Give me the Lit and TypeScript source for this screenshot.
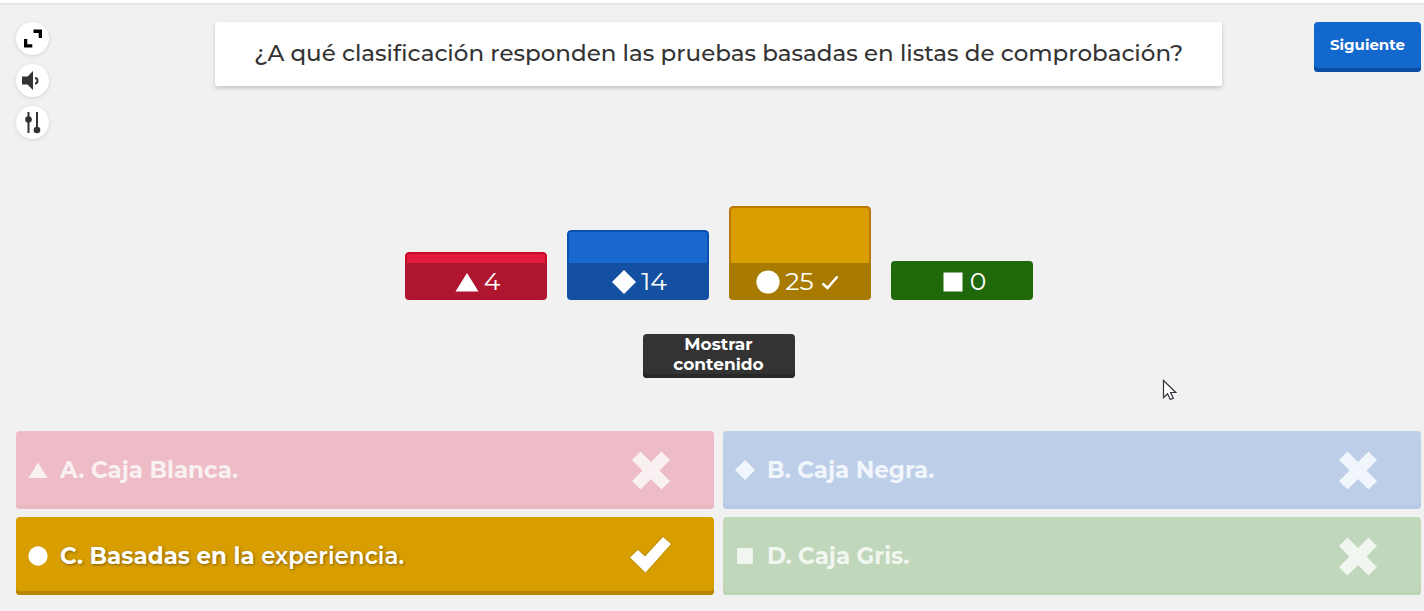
import { LitElement, html, svg, css } from "lit";
import { customElement, property } from "lit/decorators.js";
import { classMap } from "lit/directives/class-map.js";

type Shape = "triangle" | "diamond" | "circle" | "square";

interface Answer {
  shape: Shape;
  lead: string;
  tail?: string;
  votes: number;
  correct: boolean;
}

const ANSWERS: Answer[] = [
  { shape: "triangle", lead: "A. Caja Blanca.", votes: 4, correct: false },
  { shape: "diamond", lead: "B. Caja Negra.", votes: 14, correct: false },
  { shape: "circle", lead: "C. Basadas en la", tail: "experiencia.", votes: 25, correct: true },
  { shape: "square", lead: "D. Caja Gris.", votes: 0, correct: false },
];

const SHAPES = {
  triangle: svg`<path d="M12 3L23.5 21.5H.5z" />`,
  diamond: svg`<path d="M12 0L24 12 12 24 0 12z" />`,
  circle: svg`<circle cx="12" cy="12" r="11.6" />`,
  square: svg`<path d="M2.5 2.5h19v19h-19z" />`,
};

@customElement("quiz-shape")
export class QuizShape extends LitElement {
  static styles = css`
    :host { display: block; flex: none; }
    .glyph { display: block; width: 100%; height: 100%; fill: currentColor; }
  `;

  @property() name: Shape = "circle";

  render() {
    return html`<svg class="glyph" viewBox="0 0 24 24" aria-hidden="true">${SHAPES[this.name]}</svg>`;
  }
}

@customElement("vote-chart")
export class VoteChart extends LitElement {
  static styles = css`
    :host { display: block; }
    .bars { display: flex; justify-content: center; align-items: flex-end; gap: 20px; }
    .bar { width: 142px; border-radius: 4px; overflow: hidden; color: #fff; }
    .level { box-sizing: border-box; border: 2px solid; border-bottom: 0; border-radius: 4px 4px 0 0; }
    .label {
      display: flex; align-items: center; justify-content: center; gap: 5px;
      height: 37px; padding-left: 4px; font-size: 25px; line-height: 37px;
    }
    .shape { width: 24px; height: 24px; }
    .tick { width: 18px; height: 18px; margin: 0 8px 0 2px; fill: none; stroke: #fff; stroke-width: 2.6; }
    .triangle .level { background: #e21b3c; border-color: #c60929; }
    .triangle .label { background: #b0152f; }
    .diamond .level { background: #1968d0; border-color: #0a51b0; }
    .diamond .label { background: #1450a1; }
    .circle .level { background: #d89e00; border-color: #c07600; }
    .circle .label { background: #a87b00; }
    .square .level { background: #1f690b; border-color: #1f690b; }
    .square .label { background: #1f690b; }
  `;

  @property({ attribute: false }) answers: Answer[] = [];

  render() {
    return html`<div class="bars">
      ${this.answers.map(
        (a) => html`<div class="bar ${a.shape}">
          <div class="level" style="height:${2 + Math.round(a.votes * 2.2)}px"></div>
          <div class="label">
            <quiz-shape class="shape" .name=${a.shape}></quiz-shape>
            <span>${a.votes}</span>
            ${a.correct
              ? html`<svg class="tick" viewBox="0 0 18 18" role="img" aria-label="Correcta"><path d="M1.5 10.5l5 4.5L16.500 3.500" /></svg>`
              : null}
          </div>
        </div>`
      )}
    </div>`;
  }
}

@customElement("answer-card")
export class AnswerCard extends LitElement {
  static styles = css`
    :host { display: block; }
    .card {
      box-sizing: border-box; width: 100%; min-height: 78px; margin: 0; border: 0;
      border-radius: 4px; padding: 0 42px 0 12px;
      display: flex; align-items: center; gap: 12px;
      font: 700 23px/30px Montserrat, Inter, sans-serif; text-align: left;
    }
    .shape { width: 20px; height: 20px; }
    .text { flex: 1; }
    .tail { font-weight: 600; }
    .mark { width: 42px; height: 42px; flex: none; fill: currentColor; }
    .triangle { background: #eebcc6; color: #f9f0f2; box-shadow: inset 0 -4px #eab8c3; }
    .diamond { background: #bccee8; color: #f1f5fc; box-shadow: inset 0 -4px #b8cae5; }
    .square { background: #c1d7bb; color: #f1f6f0; box-shadow: inset 0 -4px #bdd3b8; }
    .circle { background: #d89e00; color: #fff; box-shadow: inset 0 -4px #b88600; }
    .circle .text { text-shadow: 1px 1px 3px rgba(0, 0, 0, 0.4); }
    .correct .mark { filter: drop-shadow(0 0 1px rgba(0, 0, 0, 0.25)); }
  `;

  @property({ attribute: false }) answer!: Answer;

  render() {
    const { shape, lead, tail, correct } = this.answer;
    return html`<button class=${classMap({ card: true, [shape]: true, correct })} type="button">
      <quiz-shape class="shape" .name=${shape}></quiz-shape>
      <span class="text">${lead}${tail ? html` <span class="tail">${tail}</span>` : null}</span>
      <svg class="mark" viewBox="0 0 42 42" role="img" aria-label=${correct ? "Correcta" : "Incorrecta"}>
        ${correct
          ? svg`<path d="M0 22.500L8 15 15 21.500 33 2 41 9 15.500 37.500z" />`
          : svg`<path d="M10.500 2.500L21 13 31.500 2.500 40 11 29.500 21.500 40 32 31.500 40.500 21 30 10.500 40.500 2 32 12.500 21.500 2 11z" />`}
      </svg>
    </button>`;
  }
}

@customElement("app-root")
export class AppRoot extends LitElement {
  static styles = css`
    :host { display: block; font-family: Montserrat, Inter, sans-serif; color: #333; }
    .page {
      box-sizing: border-box; min-height: 100vh; background: #f1f1f1;
      border-top: 3px solid #fff; display: flex; flex-direction: column;
    }
    .header {
      border-top: 2px solid #e5e5e5; padding: 17px 3px 0 16px;
      display: grid; grid-template-columns: 107px minmax(0, 1fr) 107px;
      column-gap: 92px; align-items: start;
    }
    .tools { display: flex; flex-direction: column; gap: 9px; }
    .tool {
      width: 33px; height: 33px; padding: 0; border: 0; border-radius: 50%;
      background: #fff; box-shadow: 0 1px 4px rgba(0, 0, 0, 0.12);
    }
    .tool svg { display: block; width: 33px; height: 33px; }
    .question {
      margin: 0; padding: 15px 20px 17px; background: #fff; border-radius: 2px; text-align: center;
      font-size: 23px; line-height: 32px; font-weight: 500;
      box-shadow: 0 2px 4px rgba(0, 0, 0, 0.2);
    }
    .button {
      border: 0; border-radius: 4px; color: #fff;
      font-family: inherit; font-weight: 700;
    }
    .next {
      height: 50px; padding: 0 0 6px; background: #1368ce;
      box-shadow: inset 0 -4px #0b4fa5; font-size: 15px;
    }
    .results {
      flex: 1; display: flex; flex-direction: column; justify-content: flex-end;
      align-items: center; gap: 34px; padding: 32px 3px 53px 16px;
    }
    .show {
      width: 152px; height: 44px; padding: 0 20px 4px; background: #333;
      box-shadow: inset 0 -4px #282828; font-size: 17px; line-height: 20px;
    }
    .answers {
      display: grid; grid-template-columns: repeat(2, minmax(0, 1fr)); gap: 8px 9px;
      padding: 0 3px 16px 16px;
    }
    .pointer { position: absolute; left: 1162px; top: 379px; width: 15px; height: 22px; pointer-events: none; }
  `;

  render() {
    return html`<main class="page">
      <header class="header">
        <div class="tools">
          <button class="tool" type="button" aria-label="Pantalla completa">
            <svg viewBox="0 0 33 33"><path d="M17.500 7.500h8.500v8.500h-3.300v-5h-5.200zM8 17h3.300v5.200h5V25.500H8z" fill="#000" /></svg>
          </button>
          <button class="tool" type="button" aria-label="Volumen">
            <svg viewBox="0 0 33 33">
              <path d="M6 12.500h5.500L17 7v19l-5.500-5.500H6z" fill="#333" />
              <path d="M19 14c3.300 0 3.300 5.500 0 5.500" fill="none" stroke="#333" stroke-width="2" />
            </svg>
          </button>
          <button class="tool" type="button" aria-label="Ajustes">
            <svg viewBox="0 0 33 33" fill="#333">
              <path d="M11.500 6h2v21h-2zM20 6h2v18h-2z" />
              <circle cx="12.500" cy="13.500" r="3.300" /><circle cx="21" cy="24" r="3.300" />
            </svg>
          </button>
        </div>
        <h1 class="question">¿A qué clasificación responden las pruebas basadas en listas de comprobación?</h1>
        <button class="button next" type="button">Siguiente</button>
      </header>
      <section class="results">
        <vote-chart .answers=${ANSWERS}></vote-chart>
        <button class="button show" type="button">Mostrar contenido</button>
      </section>
      <section class="answers">
        ${ANSWERS.map((a) => html`<answer-card .answer=${a}></answer-card>`)}
      </section>
      <svg class="pointer" viewBox="0 0 15 22" aria-hidden="true">
        <path d="M1.500 1.500v17l4-3.800 2.800 5.800 3-1.300-2.700-5.700h5.200z" fill="#fff" stroke="#33333d" stroke-width="1.200" />
      </svg>
    </main>`;
  }
}
